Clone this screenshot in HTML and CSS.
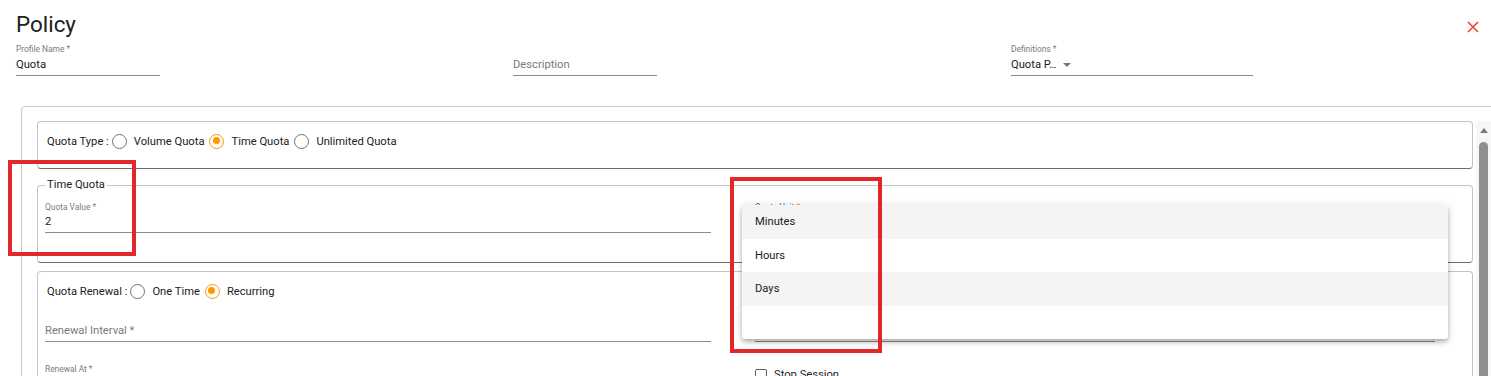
FILE: index.html
```html
<!DOCTYPE html>
<html lang="en">
<head>
  <meta charset="UTF-8">
  <title>Policy</title>
  <link rel="stylesheet" href="styles.css">
</head>
<body>

<header class="page-head">
  <h1 class="title">Policy</h1>
  <svg class="close" viewBox="0 0 12 12" width="12" height="12">
    <path d="M1 1L11 11M11 1L1 11" stroke="#f44336" stroke-width="1.6" fill="none"/>
  </svg>
</header>

<!-- profile fields -->
<div class="top-fields">
  <div class="field w-sm">
    <span class="field-label">Profile Name *</span>
    <span class="field-value">Quota</span>
  </div>
  <div class="field w-sm">
    <span class="field-label"></span>
    <span class="field-value muted">Description</span>
  </div>
  <div class="field w-md">
    <span class="field-label">Definitions *</span>
    <span class="field-value">Quota P&hellip;<span class="caret"></span></span>
  </div>
</div>

<section class="panel">
  <div class="panel-body">

    <div class="card">
      <div class="choice-row">
        <span class="choice-title">Quota Type :</span>
        <span class="radio"><span class="radio-circle"></span>Volume Quota</span>
        <span class="radio"><span class="radio-circle checked"></span>Time Quota</span>
        <span class="radio"><span class="radio-circle"></span>Unlimited Quota</span>
      </div>
    </div>

    <fieldset class="card group">
      <legend>Time Quota</legend>
      <div class="grid-2">
        <div class="field">
          <span class="field-label">Quota Value *</span>
          <span class="field-value">2</span>
        </div>
        <div class="field">
          <span class="field-label focus">Quota Unit <b>*</b></span>
          <span class="field-value"></span>
        </div>
      </div>
    </fieldset>

    <div class="card renewal">
      <div class="choice-row">
        <span class="choice-title">Quota Renewal :</span>
        <span class="radio"><span class="radio-circle"></span>One Time</span>
        <span class="radio"><span class="radio-circle checked"></span>Recurring</span>
      </div>
      <div class="grid-2 renewal-grid">
        <div class="field">
          <span class="field-label"></span>
          <span class="field-value muted">Renewal Interval *</span>
        </div>
        <div class="field">
          <span class="field-label"></span>
          <span class="field-value"></span>
        </div>
        <div class="field">
          <span class="field-label">Renewal At *</span>
          <span class="field-value"></span>
        </div>
        <label class="check"><span class="check-box"></span>Stop Session</label>
      </div>
    </div>

  </div>

  <div class="scrollbar">
    <span class="scroll-arrow"></span>
    <span class="scroll-thumb"></span>
  </div>
</section>

<!-- open select panel -->
<ul class="dropdown">
  <li class="active">Minutes</li>
  <li>Hours</li>
  <li class="active">Days</li>
  <li></li>
</ul>

<!-- annotation boxes -->
<div class="mark mark-value"></div>
<div class="mark mark-unit"></div>

</body>
</html>
```

FILE: styles.css
```css
* {
  box-sizing: border-box;
}
html, body {
  margin: 0;
  padding: 0;
}
body {
  position: relative;
  width: 1491px;
  height: 376px;
  overflow: hidden;
  background: #fff;
  font-family: Roboto, "Liberation Sans", sans-serif;
  font-size: 11.2px;
  color: #212121;
}

/* Header */
.page-head {
  display: flex;
  justify-content: space-between;
  align-items: flex-start;
  padding: 10px 12px 0 16px;
}
.title {
  margin: 0;
  font-size: 22.4px;
  line-height: 28px;
  font-weight: 400;
  color: #212121;
}
.close {
  display: block;
  margin-top: 11px;
}

/* Form fields */
.top-fields {
  display: grid;
  grid-template-columns: 497px 498px 1fr;
  padding: 6px 0 0 16px;
}
.top-fields .field-value {
  margin-top: 3px;
}
.field {
  display: flex;
  flex-direction: column;
  border-bottom: 1px solid #8c8c8c;
  padding-bottom: 2px;
}
.w-sm {
  width: 144px;
}
.w-md {
  width: 242px;
}
.field-label {
  display: block;
  height: 10px;
  font-size: 8.4px;
  line-height: 10px;
  color: #7c7c7c;
}
.field-label.focus {
  color: #6a4fb0;
}
.field-label b {
  font-weight: 400;
  color: #ff9800;
}
.field-value {
  display: flex;
  align-items: center;
  height: 16px;
  line-height: 16px;
  margin-top: 2px;
  white-space: nowrap;
}
.field-value.muted {
  color: #7a7a7a;
}
.caret {
  width: 0;
  height: 0;
  margin-left: 6px;
  border-left: 4px solid transparent;
  border-right: 4px solid transparent;
  border-top: 4px solid #757575;
}

/* Scrolling panel */
.panel {
  display: flex;
  width: 1500px;
  height: 400px;
  margin: 30px 0 0 21px;
  border: 1px solid #c8c8c8;
  border-radius: 4px 4px 0 0;
}
.panel-body {
  display: flex;
  flex-direction: column;
  width: 1451px;
  padding: 14px 0 0 15px;
}
.card {
  width: 1436px;
  margin: 0;
  border: 1px solid #c4c4c4;
  border-bottom-color: #6e6e6e;
  border-radius: 4px;
  padding: 11px 7px 19px;
}
.group {
  min-width: 0;
  margin-top: 9px;
  padding: 10px 7px 29px;
}
.group legend {
  padding: 0 2px;
  line-height: 14px;
  color: #212121;
}
.renewal {
  margin-top: 8px;
  padding-bottom: 40px;
}

.choice-row {
  display: flex;
  align-items: center;
  height: 16px;
  padding-left: 2px;
}
.choice-title {
  margin-right: 3px;
}
.radio {
  display: flex;
  align-items: center;
  margin-right: 5px;
}
.radio-circle {
  position: relative;
  width: 15px;
  height: 15px;
  margin-right: 7px;
  border: 1.6px solid #737373;
  border-radius: 50%;
}
.radio-circle.checked {
  border-color: #ff9800;
}
.radio-circle.checked::after {
  content: "";
  position: absolute;
  top: 2.4px;
  left: 2.4px;
  width: 7px;
  height: 7px;
  border-radius: 50%;
  background: #ff9800;
}

.grid-2 {
  display: grid;
  grid-template-columns: 666px 680px;
  column-gap: 44px;
}
.renewal-grid {
  margin-top: 12px;
  row-gap: 22px;
  align-items: start;
}
.check {
  display: flex;
  align-items: center;
  padding-top: 4px;
}
.check-box {
  width: 12px;
  height: 12px;
  margin-right: 7px;
  border: 1.6px solid #5c5c5c;
  border-radius: 2px;
}

/* Scrollbar */
.scrollbar {
  display: flex;
  flex-direction: column;
  align-items: center;
  width: 15px;
  margin: 14px 0 0 3px;
  padding-top: 7px;
  background: #f7f7f7;
}
.scroll-arrow {
  width: 0;
  height: 0;
  border-left: 4px solid transparent;
  border-right: 4px solid transparent;
  border-bottom: 5px solid #7b7b7b;
}
.scroll-thumb {
  width: 9px;
  height: 260px;
  margin-top: 9px;
  border-radius: 5px;
  background: #8f8f8f;
}

/* Select overlay */
.dropdown {
  position: absolute;
  top: 205px;
  left: 742px;
  width: 706px;
  margin: 0;
  padding: 0;
  list-style: none;
  background: #fff;
  border-radius: 3px;
  box-shadow: 0 2px 4px -1px rgba(0, 0, 0, 0.2),
              0 4px 5px 0 rgba(0, 0, 0, 0.14),
              0 1px 10px 0 rgba(0, 0, 0, 0.12);
}
.dropdown li {
  height: 33.6px;
  line-height: 33.6px;
  padding-left: 13px;
  color: #212121;
}
.dropdown li.active {
  background: #f4f4f4;
}

/* Red annotations */
.mark {
  position: absolute;
  border: 4px solid #e3262a;
}
.mark-value {
  top: 160px;
  left: 8px;
  width: 128px;
  height: 96px;
}
.mark-unit {
  top: 177px;
  left: 730px;
  width: 152px;
  height: 176px;
}
```
